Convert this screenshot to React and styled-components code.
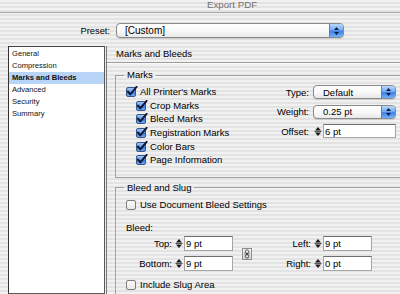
import React from 'react';
import styled, { createGlobalStyle } from 'styled-components';

const Global = createGlobalStyle`
  html, body { margin: 0; padding: 0; background: #ececec; }
  body { font-family: "Liberation Sans", Arial, sans-serif; }
`;

const stripes = `repeating-linear-gradient(to bottom, #f1f1f1 0px, #f1f1f1 2px, #e3e3e3 2px, #e3e3e3 4px)`;

const Window = styled.div`
  width: 400px;
  height: 294px;
  overflow: hidden;
  display: flex;
  flex-direction: column;
  background: ${stripes};
  font-family: "Liberation Sans", Arial, sans-serif;
  font-size: 9.5px;
  color: #000;
`;

const TitleBar = styled.div`
  flex: none;
  height: 12px;
  border-bottom: 1px solid #a8a8a8;
  padding-left: 207px;
  font-size: 9.7px;
  line-height: 10px;
  color: #707070;
  white-space: nowrap;
`;

const PresetRow = styled.div`
  flex: none;
  display: flex;
  align-items: center;
  margin-top: 10px;
  height: 15px;
  gap: 6px;
`;

const PresetLabel = styled.div`
  width: 110px;
  text-align: right;
  font-size: 9.3px;
`;

const PopupBox = styled.div`
  box-sizing: border-box;
  width: ${p => p.$w}px;
  height: ${p => p.$h || 14}px;
  display: flex;
  border: 1px solid #8a8a8a;
  border-radius: 4px;
  background: linear-gradient(to bottom, #ffffff, #f7f7f7 55%, #e9e9e9);
  box-shadow: 0 1px 1px rgba(0, 0, 0, 0.12);
  overflow: hidden;
`;

const PopupText = styled.div`
  flex: 1;
  padding-left: ${p => p.$pad || 8}px;
  display: flex;
  align-items: center;
  font-size: ${p => p.$fs || 9.5}px;
  white-space: nowrap;
`;

const PopupArrows = styled.div`
  flex: none;
  width: 13px;
  display: flex;
  align-items: center;
  justify-content: center;
  border-left: 1px solid #6d7d99;
  background: linear-gradient(to bottom, #b9d6fb 0%, #78aef5 45%, #3f7fe6 55%, #6fb2fb 100%);
`;

const Body = styled.div`
  flex: 1;
  display: flex;
  margin-top: 8px;
  min-height: 0;
`;

const Sidebar = styled.div`
  flex: none;
  box-sizing: border-box;
  margin-left: 8px;
  width: 97px;
  background: #fff;
  border: 1px solid #585858;
  border-left-color: #333;
  border-top-color: #444;
  padding-top: 1px;
`;

const SideItem = styled.div`
  height: 12px;
  line-height: 12px;
  padding-left: 3px;
  font-size: 7.6px;
  color: #111;
  white-space: nowrap;
  font-weight: ${p => (p.$active ? 700 : 400)};
  background: ${p => (p.$active ? '#b7d3f6' : 'transparent')};
`;

const Panel = styled.div`
  flex: 1;
  margin-left: 1px;
  border-left: 1px solid #7a7a7a;
  display: flex;
  flex-direction: column;
  min-width: 0;
`;

const PanelHeader = styled.div`
  height: 16px;
  line-height: 16px;
  padding-left: 9px;
  border-bottom: 1px solid #9c9c9c;
  box-shadow: 0 1px 0 #fafafa;
  white-space: nowrap;
`;

const Group = styled.fieldset`
  box-sizing: border-box;
  margin: ${p => p.$mt}px 0 0 8px;
  width: 320px;
  padding: 4px 0 ${p => p.$pb}px 10px;
  border: 1px solid #a2a2a2;
  min-width: 0;
`;

const Legend = styled.legend`
  padding: 0 3px;
  margin-left: -2px;
  line-height: 12px;
  font-size: 9.5px;
`;

const MarksLayout = styled.div`
  display: flex;
`;

const CheckColumn = styled.div`
  width: 133px;
  flex: none;
  display: flex;
  flex-direction: column;
`;

const CheckRow = styled.label`
  display: flex;
  align-items: center;
  height: ${p => p.$h || 13.6}px;
  padding-left: ${p => p.$indent || 0}px;
  gap: 2px;
  white-space: nowrap;
`;

const SettingsGrid = styled.div`
  display: grid;
  grid-template-columns: 50px 83px;
  column-gap: 4px;
  row-gap: 5.5px;
  grid-auto-rows: 14px;
  align-items: center;
`;

const FieldLabel = styled.div`
  text-align: right;
  white-space: nowrap;
  padding-right: ${p => p.$pr || 0}px;
`;

const Cell = styled.div`
  grid-column: ${p => p.$col};
  grid-row: ${p => p.$row};
  text-align: ${p => p.$align || 'left'};
  padding-right: ${p => p.$pr || 0}px;
  white-space: nowrap;
`;

const SpinWrap = styled.div`
  display: flex;
  align-items: stretch;
  height: ${p => p.$h || 14}px;
`;

const SpinButtons = styled.div`
  flex: none;
  width: 10px;
  display: flex;
  align-items: center;
  justify-content: center;
`;

const TextInput = styled.div`
  box-sizing: border-box;
  width: ${p => p.$w}px;
  height: 100%;
  background: #fff;
  border: 1px solid #a6a6a6;
  border-top-color: #6e6e6e;
  padding-left: 1px;
  display: flex;
  align-items: center;
  white-space: nowrap;
`;

const Spacer = styled.div`
  height: ${p => p.$h}px;
`;

const SubLabel = styled.div`
  height: 12px;
  line-height: 12px;
`;

const BleedGrid = styled.div`
  display: grid;
  grid-template-columns: 48px 59px 9px 10px 61px 59px;
  grid-template-rows: 15px 15px;
  row-gap: 5px;
  align-items: center;
  margin-top: 2px;
`;

const LinkCell = styled.div`
  grid-column: 4;
  grid-row: 1 / span 2;
  align-self: center;
  box-sizing: border-box;
  width: 10px;
  height: 12px;
  border: 1px solid #8c8c8c;
  background: linear-gradient(to bottom, #f4f4f4, #d6d6d6);
  display: flex;
  align-items: center;
  justify-content: center;
  margin-top: 1px;
`;

function UpDown({ color = '#111' }) {
  return (
    <svg width="7" height="10" viewBox="0 0 7 10">
      <path d="M3.5 1 L6 4 L1 4 Z" fill={color} />
      <path d="M3.5 9 L6 6 L1 6 Z" fill={color} />
    </svg>
  );
}

function Popup({ w, h, children, pad, fs }) {
  return (
    <PopupBox $w={w} $h={h}>
      <PopupText $pad={pad} $fs={fs}>{children}</PopupText>
      <PopupArrows>
        <UpDown color="#0b1e44" />
      </PopupArrows>
    </PopupBox>
  );
}

const CheckSvg = styled.svg`
  flex: none;
`;

function Check({ checked }) {
  if (checked) {
    return (
      <CheckSvg width="12" height="11" viewBox="0 0 12 11">
        <defs>
          <linearGradient id="cbg" x1="0" y1="0" x2="0" y2="1">
            <stop offset="0" stopColor="#a9cbf7" />
            <stop offset="0.5" stopColor="#5f98ea" />
            <stop offset="0.55" stopColor="#3a78dc" />
            <stop offset="1" stopColor="#79b4f8" />
          </linearGradient>
        </defs>
        <rect x="0.5" y="1.5" width="9" height="9" rx="1.5" fill="url(#cbg)" stroke="#3a5688" />
        <path d="M2 5.6 L4.3 8.4 L10.6 0.8" fill="none" stroke="#0d1631" strokeWidth="1.9" strokeLinecap="round" strokeLinejoin="round" />
      </CheckSvg>
    );
  }
  return (
    <CheckSvg width="12" height="11" viewBox="0 0 12 11">
      <defs>
        <linearGradient id="cbw" x1="0" y1="0" x2="0" y2="1">
          <stop offset="0" stopColor="#ffffff" />
          <stop offset="1" stopColor="#e6e6e6" />
        </linearGradient>
      </defs>
      <rect x="0.5" y="1.5" width="9" height="9" rx="1.5" fill="url(#cbw)" stroke="#7c7c7c" />
    </CheckSvg>
  );
}

function Spinner() {
  return (
    <SpinButtons>
      <svg width="8" height="13" viewBox="0 0 8 13">
        <path d="M4 2 L7 5.5 L1 5.5 Z" fill="#1a1a1a" />
        <line x1="0.5" y1="6.5" x2="7.5" y2="6.5" stroke="#555" strokeWidth="1" />
        <path d="M4 11 L7 7.5 L1 7.5 Z" fill="#1a1a1a" />
      </svg>
    </SpinButtons>
  );
}

function SpinField({ w, h, value }) {
  return (
    <SpinWrap $h={h}>
      <Spinner />
      <TextInput $w={w}>{value}</TextInput>
    </SpinWrap>
  );
}

function LinkIcon() {
  return (
    <svg width="8" height="10" viewBox="0 0 8 10">
      <ellipse cx="4" cy="2.8" rx="1.8" ry="2" fill="none" stroke="#555" strokeWidth="1" />
      <ellipse cx="4" cy="7.2" rx="1.8" ry="2" fill="none" stroke="#555" strokeWidth="1" />
      <line x1="4" y1="3.5" x2="4" y2="6.5" stroke="#333" strokeWidth="1" />
      <path d="M1 5 L2 5 M6 5 L7 5" stroke="#777" strokeWidth="1" />
    </svg>
  );
}

const sideItems = ['General', 'Compression', 'Marks and Bleeds', 'Advanced', 'Security', 'Summary'];
const marks = ['Crop Marks', 'Bleed Marks', 'Registration Marks', 'Color Bars', 'Page Information'];
const bleedFields = [
  { label: 'Top:', value: '9 pt', col: 1, row: 1 },
  { label: 'Left:', value: '9 pt', col: 5, row: 1 },
  { label: 'Bottom:', value: '9 pt', col: 1, row: 2 },
  { label: 'Right:', value: '0 pt', col: 5, row: 2 },
];

export default function App() {
  return (
    <>
      <Global />
      <Window>
        <TitleBar>Export PDF</TitleBar>
        <PresetRow>
          <PresetLabel>Preset:</PresetLabel>
          <Popup w={228} h={15} fs={10}>[Custom]</Popup>
        </PresetRow>
        <Body>
          <Sidebar>
            {sideItems.map(item => (
              <SideItem key={item} $active={item === 'Marks and Bleeds'}>{item}</SideItem>
            ))}
          </Sidebar>
          <Panel>
            <PanelHeader>Marks and Bleeds</PanelHeader>
            <Group $mt={6} $pb={10}>
              <Legend>Marks</Legend>
              <MarksLayout>
                <CheckColumn>
                  <CheckRow>
                    <Check checked />
                    All Printer's Marks
                  </CheckRow>
                  {marks.map(m => (
                    <CheckRow key={m} $indent={10}>
                      <Check checked />
                      {m}
                    </CheckRow>
                  ))}
                </CheckColumn>
                <SettingsGrid>
                  <FieldLabel>Type:</FieldLabel>
                  <Popup w={83} h={14} pad={9}>Default</Popup>
                  <FieldLabel>Weight:</FieldLabel>
                  <Popup w={83} h={14} pad={9}>0.25 pt</Popup>
                  <FieldLabel>Offset:</FieldLabel>
                  <SpinField w={73} h={14} value="6 pt" />
                </SettingsGrid>
              </MarksLayout>
            </Group>
            <Group $mt={4} $pb={20}>
              <Legend>Bleed and Slug</Legend>
              <CheckRow $h={14}>
                <Check />
                Use Document Bleed Settings
              </CheckRow>
              <Spacer $h={10} />
              <SubLabel>Bleed:</SubLabel>
              <BleedGrid>
                {bleedFields.map(f => (
                  <React.Fragment key={f.label}>
                    <Cell $col={f.col} $row={f.row} $align="right" $pr={2}>{f.label}</Cell>
                    <Cell $col={f.col + 1} $row={f.row}>
                      <SpinField w={49} h={15} value={f.value} />
                    </Cell>
                  </React.Fragment>
                ))}
                <LinkCell><LinkIcon /></LinkCell>
              </BleedGrid>
              <Spacer $h={7} />
              <CheckRow $h={14}>
                <Check />
                Include Slug Area
              </CheckRow>
            </Group>
          </Panel>
        </Body>
      </Window>
    </>
  );
}
